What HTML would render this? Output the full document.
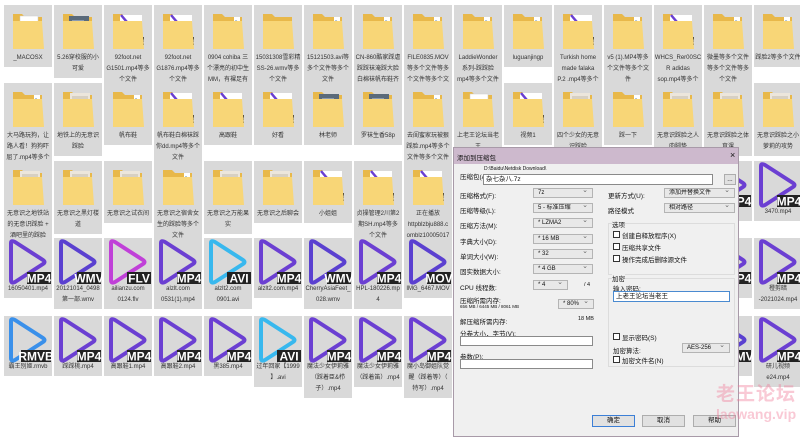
<!DOCTYPE html>
<html><head><meta charset="utf-8">
<style>
*{margin:0;padding:0;box-sizing:border-box}
body{width:800px;height:428px;overflow:hidden;background:#fff;position:relative;font-family:"Liberation Sans","Noto Sans CJK SC",sans-serif;}
.t{position:absolute;width:48px;background:#d9d9d9;}
.t .lb{position:absolute;left:0;right:0;text-align:center;font-size:6px;line-height:11px;color:#333;white-space:nowrap;overflow:hidden}
.t svg{position:absolute;left:0;top:0}
#dlg{position:absolute;left:453px;top:147px;width:286px;height:290px;background:#f0f0f0;border:1px solid #a89aa8;font-size:6.5px;color:#111}
#dlg .a{position:absolute;white-space:nowrap}
.cb{position:absolute;height:10px;background:#e8e8e8;border:1px solid #b4b4b4;font-size:6px;line-height:8px;padding-left:4px;white-space:nowrap;overflow:hidden}
.cb:after{content:"⌄";position:absolute;right:4px;top:-2px;font-size:7px;color:#666}
.in{position:absolute;height:10px;background:#fff;border:1px solid #8a8a8a}
.grp{position:absolute;border:1px solid #dcdcdc}
.chk{position:absolute;width:7px;height:7px;border:1px solid #333;background:#fff}
.btn{position:absolute;height:12px;width:43px;background:#e1e1e1;border:1px solid #adadad;text-align:center;font-size:6.5px;line-height:10px}
</style></head><body>
<div id="g"></div>

<div id="dlg">
<div style="position:absolute;left:0;top:0;right:0;height:16px;background:#cdb9cd"></div>
<div class="a" style="left:3px;top:4px">添加到压缩包</div>
<div class="a" style="left:276px;top:2px;font-size:9px">×</div>

<div class="a" style="left:6px;top:23px">压缩包(A):</div>
<div class="a" style="left:30px;top:18px;font-size:5px">D:\Baidu\Netdisk Download\</div>
<div class="in" style="left:29px;top:26px;width:230px;height:11px;font-size:6.5px;line-height:9px;padding-left:2px">杂七杂八.7z</div>
<div class="btn" style="left:270px;top:26px;width:12px;height:11px">...</div>

<div class="a" style="left:6px;top:42px">压缩格式(F):</div>
<div class="a" style="left:6px;top:57px">压缩等级(L):</div>
<div class="a" style="left:6px;top:72px">压缩方法(M):</div>
<div class="a" style="left:6px;top:88px">字典大小(D):</div>
<div class="a" style="left:6px;top:103px">单词大小(W):</div>
<div class="a" style="left:6px;top:118px">固实数据大小:</div>
<div class="a" style="left:6px;top:134px">CPU 线程数:</div>
<div class="cb" style="left:79px;top:40px;width:60px">7z</div>
<div class="cb" style="left:79px;top:55px;width:60px">5 - 标准压缩</div>
<div class="cb" style="left:79px;top:70px;width:60px">* LZMA2</div>
<div class="cb" style="left:79px;top:86px;width:60px">* 16 MB</div>
<div class="cb" style="left:79px;top:101px;width:60px">* 32</div>
<div class="cb" style="left:79px;top:116px;width:60px">* 4 GB</div>
<div class="cb" style="left:79px;top:132px;width:35px">* 4</div>
<div class="a" style="left:130px;top:134px;font-size:5.5px">/ 4</div>
<div class="a" style="left:6px;top:147px">压缩所需内存:</div>
<div class="a" style="left:6px;top:156px;font-size:4.5px">656 MB / 6445 MB / 8061 MB</div>
<div class="cb" style="left:104px;top:151px;width:36px">* 80%</div>
<div class="a" style="left:6px;top:168px">解压缩所需内存:</div>
<div class="a" style="left:124px;top:168px;font-size:5.5px">18 MB</div>
<div class="a" style="left:6px;top:180px">分卷大小，字节(V):</div>
<div class="in" style="left:6px;top:188px;width:133px"></div>
<div class="a" style="left:6px;top:203px">参数(P):</div>
<div class="in" style="left:6px;top:211px;width:133px"></div>

<div class="a" style="left:154px;top:42px">更新方式(U):</div>
<div class="cb" style="left:210px;top:40px;width:71px">添加并替换文件</div>
<div class="a" style="left:154px;top:57px">路径模式</div>
<div class="cb" style="left:210px;top:55px;width:71px">相对路径</div>
<div class="grp" style="left:154px;top:75px;width:127px;height:52px"></div>
<div class="a" style="left:158px;top:71px;background:#f0f0f0">选项</div>
<div class="chk" style="left:159px;top:83px"></div><div class="a" style="left:168px;top:82px">创建自释放程序(X)</div>
<div class="chk" style="left:159px;top:95px"></div><div class="a" style="left:168px;top:94px">压缩共享文件</div>
<div class="chk" style="left:159px;top:107px"></div><div class="a" style="left:168px;top:106px">操作完成后删除源文件</div>
<div class="grp" style="left:154px;top:130px;width:127px;height:89px"></div>
<div class="a" style="left:158px;top:125px;background:#f0f0f0">加密</div>
<div class="a" style="left:159px;top:135px">输入密码:</div>
<div class="in" style="left:159px;top:143px;width:117px;height:11px;border-color:#4a8ad0;font-size:6.5px;line-height:9px;padding-left:2px">上老王论坛当老王</div>
<div class="chk" style="left:159px;top:185px"></div><div class="a" style="left:168px;top:184px">显示密码(S)</div>
<div class="a" style="left:159px;top:197px">加密算法:</div>
<div class="cb" style="left:228px;top:195px;width:48px">AES-256</div>
<div class="chk" style="left:159px;top:208px"></div><div class="a" style="left:168px;top:207px">加密文件名(N)</div>

<div class="btn" style="left:138px;top:267px;border:1.5px solid #3c7fd6">确定</div>
<div class="btn" style="left:188px;top:267px">取消</div>
<div class="btn" style="left:239px;top:267px">帮助</div>
</div>

<div style="position:absolute;left:716px;top:382px;font-size:19px;line-height:22px;white-space:nowrap;color:rgba(240,120,150,0.4);font-family:'Noto Sans CJK SC',sans-serif;font-weight:bold;letter-spacing:1px">老王论坛</div>
<div style="position:absolute;left:716px;top:406px;font-size:14px;line-height:16px;white-space:nowrap;color:rgba(240,120,150,0.4);font-weight:bold">laowang.vip</div>

<script>
var C={MP4:['#6b3fd2','#4450d6'],WMV:['#5a40d0','#4a55d8'],FLV:['#c040d8','#9a48d8'],AVI:['#38b8ee','#3aa0e8'],RMVB:['#3a90ea','#3a78e0'],MOV:['#5b40d0','#4a55d8']};
function vid(k){var c=C[k]||C.MP4,w=k.length>3?30:24;
return '<svg width="48" height="48"><path d="M7 5 L7 42 Q7 46 11 44 L39 26 Q42 24 39 22 L11 4 Q7 2 7 5Z" fill="none" stroke="'+c[0]+'" stroke-width="4" stroke-linejoin="round"/><rect x="'+(47-w)+'" y="34" width="'+w+'" height="12" fill="#222"/><text x="'+(47-w/2)+'" y="44.5" fill="#fff" font-size="12" font-weight="bold" font-family="Liberation Sans" text-anchor="middle">'+k+'</text></svg>';}
function fold(t){var s='<svg width="48" height="48"><path d="M9 9 h9 l3 3 h17 v32 h-29z" fill="#e8b84a"/>';
if(t=='doc')s+='<rect x="16" y="11" width="18" height="30" fill="#fff" stroke="#ccc" stroke-width=".5"/>';
if(t=='photo')s+='<rect x="15" y="11" width="20" height="28" fill="#5a6a7a"/><rect x="18" y="15" width="12" height="20" fill="#8a9ab0"/>';
if(t=='v1'||t=='v2')s+='<rect x="16" y="10" width="22" height="30" fill="#fff"/><path d="M17 10 L28 23 L17 36" fill="none" stroke="#6a3fd2" stroke-width="2.5"/><rect x="28" y="32" width="12" height="8" fill="#333"/><text x="34" y="39" fill="#fff" font-size="6" font-weight="bold" text-anchor="middle" font-family="Liberation Sans">MP4</text>';
if(t=='f')s+='<rect x="30" y="12" width="6" height="29" fill="#fff"/><rect x="31" y="15" width="2" height="23" fill="#7aa0c8" opacity=".6"/>';
if(t=='txt')s+='<rect x="16" y="10" width="20" height="30" fill="#ece6dc"/><rect x="18" y="13" width="16" height="24" fill="#cfc6b8" opacity=".7"/>';
s+='<path d="M9 16 h29 l2 28 h-31z" fill="#f8d677"/></svg>';return s;}
var rows=[
[5,[['doc','_MACOSX'],['photo','5.26穿校服的小|可爱'],['v2','92foot.net|G1501.mp4等多|个文件'],['v1','92foot.net|G1876.mp4等多|个文件'],['f','0904  cohiba 三|个漂亮的初中生|MM，有裸足有|棉袜【108P】...'],['p','15031308雪彩精|SS-26.wmv等多|个文件'],['f','15121503.avi等|多个文件等多个|文件'],['f','CN-860酷家踩虐|踩踩袜淹踩大脸|白棉袜帆布鞋齐|踩脸.wmv等多...'],['f','FILE0835.MOV|等多个文件等多|个文件等多个文|件等多个文件...'],['f','LaddieWonder|系列-踩踩脸|mp4等多个文件|等多个文件'],['f','luguanjingp'],['v1','Turkish home|made falaka|P.2 .mp4等多个|文件'],['f','v5 (1).MP4等多|个文件等多个文|件'],['v2','WHCS_Rer00SC|R adidas|sop.mp4等多个|文件'],['f','微墨等多个文件|等多个文件等多|个文件'],['f','踩脸2等多个文件']]],
[83,[['f','大马路玩狗，让|路人看！狗狗吓|屈了.mp4等多个|文件等多个文件'],['txt','地铁上的无意识|踩脸'],['f','帆布鞋'],['v1','帆布鞋白棉袜踩|你dd.mp4等多个|文件'],['v2','高跟鞋'],['v2','好看'],['photo','林老师'],['photo','罗袜生香58p'],['f','去闺蜜家玩被狠|踩脸.mp4等多个|文件等多个文件'],['doc','上老王论坛当老|王'],['v1','视频1'],['txt','四个少女的无意|识踩脸'],['f','踩一下'],['txt','无意识踩脸之人|肉脚垫'],['txt','无意识踩脸之体|育课'],['txt','无意识踩脸之小|萝莉的攻势']]],
[161,[['txt','无意识之地铁站|的无意识踩脸 +|酒吧里的踩脸'],['txt','无意识之黑灯楼|道'],['txt','无意识之试衣间'],['f','无意识之宿舍女|生的踩脸等多个|文件'],['txt','无意识之万能果|实'],['txt','无意识之后聊会'],['v1','小姐姐'],['v1','贞操管理2川第2|期SH.mp4等多|个文件'],['v2','正在播放|httpblzbju888.c|omblz10005017|.mp4.mp4等多...'],0,0,0,0,0,['MP4','x'],['MP4','3470.mp4']]],
[238,[['MP4','16050401.mp4'],['WMV','20121014_0498|第一部.wmv'],['FLV','ailianzu.com|0124.flv'],['MP4','alzlt.com|0531(1).mp4'],['AVI','alzlt2.com|0901.avi'],['MP4','alzlt2.com.mp4'],['WMV','CherryAsiaFeet_|028.wmv'],['MP4','HPL-180226.mp|4'],['MOV','IMG_6467.MOV'],0,0,0,0,0,['MP4','x'],['MP4','橙剪暗|-2021024.mp4']]],
[316,[['RMVB','霸王别姬.rmvb'],['MP4','踩踩桃.mp4'],['MP4','高跟鞋1.mp4'],['MP4','高跟鞋2.mp4'],['MP4','黑385.mp4'],['AVI','过年回家【1999|】.avi'],['MP4','魔法少女伊莉雅|（踩着臣&栉|子）.mp4'],['MP4','魔法少女伊莉雅|（踩着笛）.mp4'],['MP4','魔小岛御姐队觉|醒（踩着等）（|特写）.mp4'],0,0,0,0,0,['WMV','x'],['MP4','研儿视频|e24.mp4']]]];
var h='';
rows.forEach(function(r){r[1].forEach(function(it,i){if(!it)return;var lines=it[1].split('|'),isV=C[it[0]];
var ly=isV?46:48,ht=ly+lines.length*11+3;
h+='<div class="t" style="left:'+(4+50*i)+'px;top:'+r[0]+'px;height:'+ht+'px">'+(isV?vid(it[0]):fold(it[0]))+'<div class="lb" style="top:'+ly+'px">'+lines.join('<br>')+'</div></div>';});});
document.getElementById('g').innerHTML=h;
</script>
</body></html>
